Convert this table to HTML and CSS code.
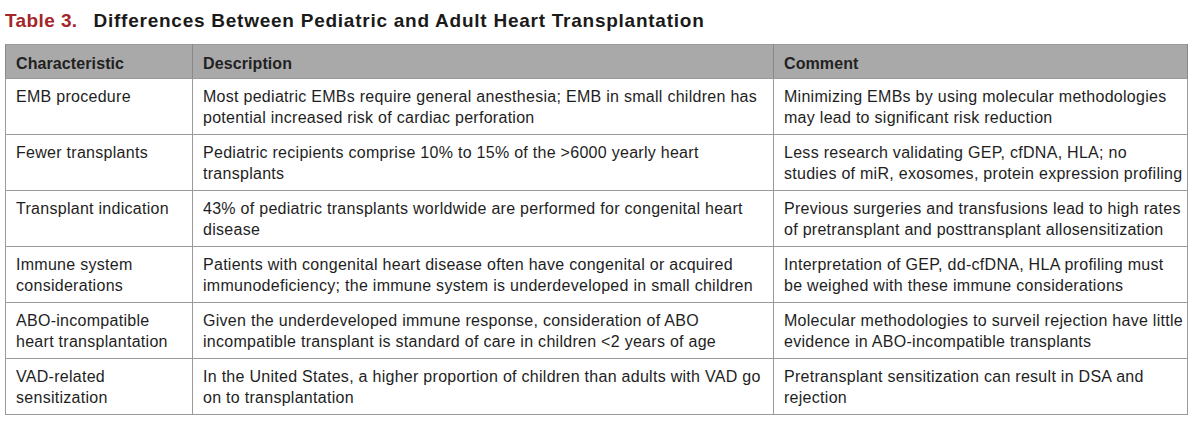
FILE: index.html
```html
<!DOCTYPE html>
<html lang="en">
<head>
    <meta charset="UTF-8">
    <title>Table 3</title>
    <link rel="stylesheet" href="styles.css">
</head>
<body>
    <h1 class="caption"><span class="label">Table 3.</span>Differences Between Pediatric and Adult Heart Transplantation</h1>
    <table class="data-table">
        <colgroup>
            <col class="col-char">
            <col class="col-desc">
            <col class="col-comment">
        </colgroup>
        <thead>
            <tr>
                <th>Characteristic</th>
                <th>Description</th>
                <th>Comment</th>
            </tr>
        </thead>
        <tbody>
            <tr>
                <td>EMB procedure</td>
                <td>Most pediatric EMBs require general anesthesia; EMB in small children has potential increased risk of cardiac perforation</td>
                <td>Minimizing EMBs by using molecular methodologies may lead to significant risk reduction</td>
            </tr>
            <tr>
                <td>Fewer transplants</td>
                <td>Pediatric recipients comprise 10% to 15% of the &gt;6000 yearly heart transplants</td>
                <td>Less research validating GEP, cfDNA, HLA; no<br>studies of miR, exosomes, protein expression profiling</td>
            </tr>
            <tr>
                <td>Transplant indication</td>
                <td>43% of pediatric transplants worldwide are performed for congenital heart disease</td>
                <td>Previous surgeries and transfusions lead to high rates of pretransplant and posttransplant allosensitization</td>
            </tr>
            <tr>
                <td>Immune system considerations</td>
                <td>Patients with congenital heart disease often have congenital or acquired immunodeficiency; the immune system is underdeveloped in small children</td>
                <td>Interpretation of GEP, dd-cfDNA, HLA profiling must be weighed with these immune considerations</td>
            </tr>
            <tr>
                <td>ABO-incompatible heart transplantation</td>
                <td>Given the underdeveloped immune response, consideration of ABO incompatible transplant is standard of care in children &lt;2 years of age</td>
                <td>Molecular methodologies to surveil rejection have little evidence in ABO-incompatible transplants</td>
            </tr>
            <tr>
                <td>VAD-related sensitization</td>
                <td>In the United States, a higher proportion of children than adults with VAD go on to transplantation</td>
                <td>Pretransplant sensitization can result in DSA and rejection</td>
            </tr>
        </tbody>
    </table>
</body>
</html>
```

FILE: styles.css
```css
body {
    margin: 0;
    padding: 10px 5px 0 5px;
    background-color: white;
    color: #1e1e1e;
    font-family: "Liberation Sans", Arial, sans-serif;
}
.caption {
    font-size: 19px;
    font-weight: bold;
    letter-spacing: 0.75px;
    line-height: 22px;
    margin: 0 0 12px 0;
    color: #1a1a1a;
}
.caption .label {
    color: #a3262b;
    letter-spacing: 0.4px;
    margin-right: 16px;
}
.data-table {
    width: 1182px;
    border-collapse: collapse;
    table-layout: fixed;
    font-size: 16px;
    letter-spacing: 0.28px;
    line-height: 21px;
}
.col-char {
    width: 187px;
}
.col-desc {
    width: 581px;
}
.col-comment {
    width: 414px;
}
.data-table th,
.data-table td {
    border: 1.5px solid #9a9a9a;
    text-align: left;
    vertical-align: top;
}
.data-table th {
    background-color: #a9a9a9;
    font-weight: bold;
    letter-spacing: 0.1px;
    padding: 8px 10px 4px 10px;
    border-left-color: #888;
    border-right-color: #888;
    color: #222;
}
.data-table td {
    padding: 7px 10px 6px 10px;
}
.data-table td:last-child {
    padding-right: 2px;
}
.data-table tbody tr {
    height: 56px;
}
```
